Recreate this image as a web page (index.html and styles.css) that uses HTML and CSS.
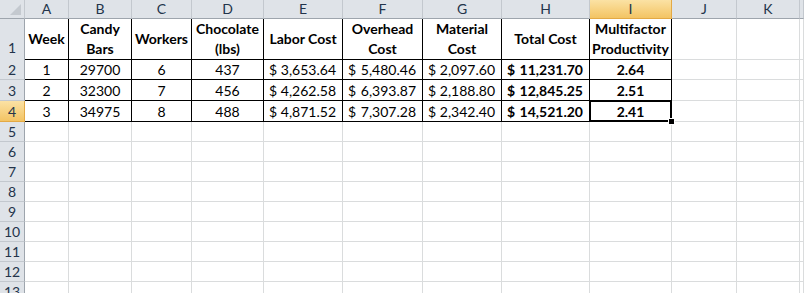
FILE: index.html
```html
<!DOCTYPE html>
<html lang="en">

<head>
    <meta charset="UTF-8">
    <title>Multifactor Productivity</title>
    <link rel="stylesheet" href="styles.css">
</head>

<body>
    <div class="sheet">
        <div class="row head">
            <div class="corner">
                <svg width="24" height="18" viewBox="0 0 24 18"><polygon points="21,4 21,15 10,15" fill="#c4c9cf"/></svg>
            </div>
            <div class="ch">A</div><div class="ch">B</div><div class="ch">C</div><div class="ch">D</div>
            <div class="ch">E</div><div class="ch">F</div><div class="ch">G</div><div class="ch">H</div>
            <div class="ch sel">I</div><div class="ch">J</div><div class="ch">K</div><div class="ch"></div>
        </div>

        <div class="row r1">
            <div class="rh">1</div>
            <div class="c t th">Week</div>
            <div class="c t th">Candy<br>Bars</div>
            <div class="c t th">Workers</div>
            <div class="c t th">Chocolate<br>(lbs)</div>
            <div class="c t th">Labor Cost</div>
            <div class="c t th">Overhead<br>Cost</div>
            <div class="c t th">Material<br>Cost</div>
            <div class="c t th">Total Cost</div>
            <div class="c t th">Multifactor<br>Productivity</div>
            <div class="c"></div><div class="c"></div><div class="c"></div>
        </div>

        <div class="row data">
            <div class="rh">2</div>
            <div class="c t mid">1</div>
            <div class="c t mid">29700</div>
            <div class="c t mid">6</div>
            <div class="c t mid">437</div>
            <div class="c t acc"><span>$</span><span>3,653.64</span></div>
            <div class="c t acc"><span>$</span><span>5,480.46</span></div>
            <div class="c t acc"><span>$</span><span>2,097.60</span></div>
            <div class="c t acc bold"><span>$</span><span>11,231.70</span></div>
            <div class="c t mid bold">2.64</div>
            <div class="c"></div><div class="c"></div><div class="c"></div>
        </div>

        <div class="row data">
            <div class="rh">3</div>
            <div class="c t mid">2</div>
            <div class="c t mid">32300</div>
            <div class="c t mid">7</div>
            <div class="c t mid">456</div>
            <div class="c t acc"><span>$</span><span>4,262.58</span></div>
            <div class="c t acc"><span>$</span><span>6,393.87</span></div>
            <div class="c t acc"><span>$</span><span>2,188.80</span></div>
            <div class="c t acc bold"><span>$</span><span>12,845.25</span></div>
            <div class="c t mid bold">2.51</div>
            <div class="c"></div><div class="c"></div><div class="c"></div>
        </div>

        <div class="row data">
            <div class="rh sel">4</div>
            <div class="c t mid">3</div>
            <div class="c t mid">34975</div>
            <div class="c t mid">8</div>
            <div class="c t mid">488</div>
            <div class="c t acc"><span>$</span><span>4,871.52</span></div>
            <div class="c t acc"><span>$</span><span>7,307.28</span></div>
            <div class="c t acc"><span>$</span><span>2,342.40</span></div>
            <div class="c t acc bold"><span>$</span><span>14,521.20</span></div>
            <div class="c t mid bold active">2.41<span class="handle"></span></div>
            <div class="c"></div><div class="c"></div><div class="c"></div>
        </div>

        <!-- empty rows -->
        <div class="row"><div class="rh">5</div><div class="c"></div><div class="c"></div><div class="c"></div><div class="c"></div><div class="c"></div><div class="c"></div><div class="c"></div><div class="c"></div><div class="c"></div><div class="c"></div><div class="c"></div><div class="c"></div></div>
        <div class="row"><div class="rh">6</div><div class="c"></div><div class="c"></div><div class="c"></div><div class="c"></div><div class="c"></div><div class="c"></div><div class="c"></div><div class="c"></div><div class="c"></div><div class="c"></div><div class="c"></div><div class="c"></div></div>
        <div class="row"><div class="rh">7</div><div class="c"></div><div class="c"></div><div class="c"></div><div class="c"></div><div class="c"></div><div class="c"></div><div class="c"></div><div class="c"></div><div class="c"></div><div class="c"></div><div class="c"></div><div class="c"></div></div>
        <div class="row"><div class="rh">8</div><div class="c"></div><div class="c"></div><div class="c"></div><div class="c"></div><div class="c"></div><div class="c"></div><div class="c"></div><div class="c"></div><div class="c"></div><div class="c"></div><div class="c"></div><div class="c"></div></div>
        <div class="row"><div class="rh">9</div><div class="c"></div><div class="c"></div><div class="c"></div><div class="c"></div><div class="c"></div><div class="c"></div><div class="c"></div><div class="c"></div><div class="c"></div><div class="c"></div><div class="c"></div><div class="c"></div></div>
        <div class="row"><div class="rh">10</div><div class="c"></div><div class="c"></div><div class="c"></div><div class="c"></div><div class="c"></div><div class="c"></div><div class="c"></div><div class="c"></div><div class="c"></div><div class="c"></div><div class="c"></div><div class="c"></div></div>
        <div class="row"><div class="rh">11</div><div class="c"></div><div class="c"></div><div class="c"></div><div class="c"></div><div class="c"></div><div class="c"></div><div class="c"></div><div class="c"></div><div class="c"></div><div class="c"></div><div class="c"></div><div class="c"></div></div>
        <div class="row"><div class="rh">12</div><div class="c"></div><div class="c"></div><div class="c"></div><div class="c"></div><div class="c"></div><div class="c"></div><div class="c"></div><div class="c"></div><div class="c"></div><div class="c"></div><div class="c"></div><div class="c"></div></div>
        <div class="row"><div class="rh">13</div><div class="c"></div><div class="c"></div><div class="c"></div><div class="c"></div><div class="c"></div><div class="c"></div><div class="c"></div><div class="c"></div><div class="c"></div><div class="c"></div><div class="c"></div><div class="c"></div></div>
    </div>
</body>

</html>
```

FILE: styles.css
```css
body,
html {
    margin: 0;
    height: 100%;
    overflow: hidden;
    background: #fff;
}

.sheet {
    width: 804px;
    font-family: Lato, "Open Sans", sans-serif;
    font-size: 14px;
    color: #000;
}

.row {
    display: grid;
    grid-template-columns: 25px 44px 63px 60px 72px 79px 80px 79px 88px 82px 65px 63px 1fr;
    height: 20px;
}

.row > div {
    box-sizing: border-box;
    border-right: 1px solid #dadcdd;
    border-bottom: 1px solid #dadcdd;
}

/* column headers */
.head {
    height: 19px;
}

.head > div {
    background: #dfe3e8;
    border-right-color: #c3c8ce;
    border-bottom-color: #9ea5ad;
}

.ch {
    display: flex;
    align-items: center;
    justify-content: center;
    color: #23344b;
    line-height: 1;
}

.corner {
    display: flex;
}

.ch.sel {
    background: linear-gradient(#fbe2a4, #f3c464);
    border-right-color: #e3a945;
    border-bottom-color: #e3a945;
}

/* row headers */
.rh {
    display: flex;
    align-items: flex-end;
    justify-content: center;
    padding-bottom: 1px;
    background: #dfe3e8;
    color: #23344b;
    line-height: 17px;
    border-right-color: #9ea5ad !important;
    border-bottom-color: #c3c8ce !important;
}

.rh.sel {
    background: linear-gradient(#fbe2a4, #f3c464);
    border-bottom-color: #e3a945 !important;
    border-right-color: #e3a945 !important;
}

.r1 {
    height: 40px;
}

.r1 .rh {
    padding-bottom: 3px;
}

.data {
    height: 21px;
}

/* table cells */
.c {
    display: flex;
    align-items: flex-end;
    line-height: 17px;
    padding-bottom: 1px;
    white-space: nowrap;
}

.row > .t {
    border-right-color: #000;
    border-bottom-color: #000;
}

.th {
    font-weight: bold;
    align-items: center;
    justify-content: center;
    text-align: center;
    line-height: 20px;
    padding-bottom: 0;
}

.mid {
    justify-content: center;
}

.acc {
    justify-content: space-between;
    padding-left: 5px;
    padding-right: 6px;
}

.bold {
    font-weight: bold;
}

.active {
    position: relative;
}

.active::before {
    content: "";
    position: absolute;
    left: -1px;
    top: -1px;
    right: -1px;
    bottom: -1px;
    border: 2px solid #000;
    box-shadow: inset 0 0 0 1px #fff;
}

.handle {
    position: absolute;
    right: -4px;
    bottom: -4px;
    width: 5px;
    height: 5px;
    background: #000;
    border: 1px solid #fff;
}
```
